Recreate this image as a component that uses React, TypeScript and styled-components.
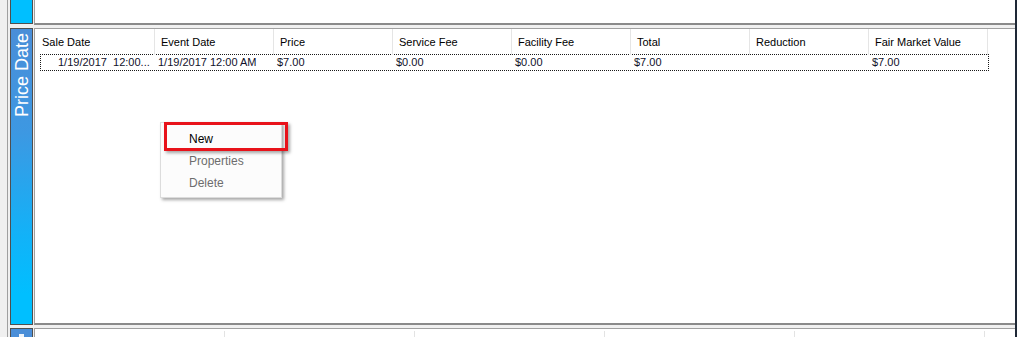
import styled, { createGlobalStyle } from 'styled-components';

const GlobalStyle = createGlobalStyle`
  html, body {
    margin: 0;
    padding: 0;
    background: #ffffff;
  }
  body {
    font-family: "Liberation Sans", Arial, sans-serif;
    overflow: hidden;
  }
`;

const headers = [
  'Sale Date',
  'Event Date',
  'Price',
  'Service Fee',
  'Facility Fee',
  'Total',
  'Reduction',
  'Fair Market Value',
];

const saleRow = [
  '1/19/2017  12:00...',
  '1/19/2017 12:00 AM',
  '$7.00',
  '$0.00',
  '$0.00',
  '$7.00',
  '',
  '$7.00',
];

const menuItems = [
  { label: 'New', disabled: false },
  { label: 'Properties', disabled: true },
  { label: 'Delete', disabled: true },
];

const App = () => {
  return (
    <Screen>
      <GlobalStyle />
      <Gutter />
      <Main>
        <Section $height={25}>
          <Tab $fill="#00bfff" $open />
          <Panel $bottom />
        </Section>

        <Section $height={297}>
          <Tab $fill="linear-gradient(to bottom, #4a8ed8 0%, #3d98e2 35%, #12b2f8 70%, #00bfff 90%)">
            <TabLabel>Price Date</TabLabel>
          </Tab>
          <Panel $top $bottom>
            <HeaderRow>
              {headers.map((h) => (
                <HeaderCell key={h}>{h}</HeaderCell>
              ))}
            </HeaderRow>
            <DataRow>
              {saleRow.map((v, i) => (
                <DataCell key={i} $first={i === 0}>
                  {v}
                </DataCell>
              ))}
            </DataRow>
          </Panel>
        </Section>

        <Section $height={20}>
          <Tab $fill="#4a8ed8">
            <TabIcon />
          </Tab>
          <Panel $top>
            <FooterRow>
              {Array.from({ length: 6 }).map((_, i) => (
                <FooterCell key={i} />
              ))}
            </FooterRow>
          </Panel>
        </Section>
      </Main>

      <ContextMenu>
        {menuItems.map((item) => (
          <MenuItem key={item.label} $disabled={item.disabled}>
            {item.label}
          </MenuItem>
        ))}
      </ContextMenu>
      <Highlight />
    </Screen>
  );
};

const Screen = styled.div`
  position: relative;
  display: flex;
  width: 1018px;
  height: 337px;
  overflow: hidden;
`;

const Gutter = styled.div`
  width: 7px;
  flex-shrink: 0;
  background: #f0f0f0;
`;

const Main = styled.div`
  display: flex;
  flex-direction: column;
  gap: 3px;
  width: 1005px;
  flex-shrink: 0;
  padding-left: 2px;
  border-left: 1px solid #a0a0a0;
  border-right: 2px solid #1e2836;
  background: #f0f0f0;
`;

const Section = styled.div<{ $height: number }>`
  display: flex;
  gap: 1px;
  height: ${({ $height }) => $height}px;
  flex-shrink: 0;
`;

const Tab = styled.div<{ $fill: string; $open?: boolean }>`
  box-sizing: border-box;
  width: 23px;
  flex-shrink: 0;
  display: flex;
  flex-direction: column;
  align-items: center;
  padding-top: 4px;
  margin-bottom: ${({ $open }) => ($open ? '1px' : '0')};
  background: ${({ $fill }) => $fill};
  border: 1px solid #4f4f4f;
  border-top: ${({ $open }) => ($open ? 'none' : '1px solid #4f4f4f')};
`;

const TabLabel = styled.span`
  writing-mode: vertical-rl;
  transform: rotate(180deg);
  color: #ffffff;
  font-size: 18px;
  line-height: 20px;
  white-space: nowrap;
`;

const TabIcon = styled.span`
  display: block;
  width: 5px;
  height: 5px;
  margin-top: 1px;
  background: #eef4fb;
`;

const Panel = styled.div<{ $top?: boolean; $bottom?: boolean }>`
  position: relative;
  flex: 1;
  min-width: 0;
  background: #ffffff;
  border-left: 1px solid #a0a0a0;
  border-top: ${({ $top }) => ($top ? '1px solid #a0a0a0' : 'none')};
  border-bottom: ${({ $bottom }) => ($bottom ? '2px solid #8a8a8a' : 'none')};
`;

const HeaderRow = styled.div`
  display: grid;
  grid-template-columns: repeat(8, 119px);
  height: 25px;
  margin-left: 1px;
`;

const HeaderCell = styled.div`
  box-sizing: border-box;
  padding-left: 6px;
  border-right: 1px solid #e5e5e5;
  color: #000000;
  font-size: 11px;
  line-height: 26px;
  white-space: nowrap;
`;

const DataRow = styled.div`
  box-sizing: border-box;
  display: grid;
  grid-template-columns: 114px repeat(7, 119px);
  width: 949px;
  height: 17px;
  margin-left: 5px;
  border: 1px dotted #1a1a1a;
`;

const DataCell = styled.div<{ $first?: boolean }>`
  padding-left: ${({ $first }) => ($first ? '17px' : '3px')};
  color: #10102a;
  font-size: 11px;
  line-height: 15px;
  white-space: pre;
  overflow: hidden;
`;

const FooterRow = styled.div`
  display: grid;
  grid-template-columns: repeat(6, 190px);
  height: 100%;
  padding-top: 2px;
`;

const FooterCell = styled.div`
  border-right: 1px solid #e3e3e3;
`;

const ContextMenu = styled.div`
  position: absolute;
  left: 160px;
  top: 122px;
  box-sizing: border-box;
  width: 122px;
  padding: 5px 0 3px;
  background: #fcfcfc;
  border: 1px solid #dcdcdc;
  box-shadow: 2px 2px 3px rgba(0, 0, 0, 0.35);
`;

const MenuItem = styled.div<{ $disabled?: boolean }>`
  height: 22px;
  padding-left: 28px;
  color: ${({ $disabled }) => ($disabled ? '#6d6d6d' : '#000000')};
  font-size: 12px;
  line-height: 22px;
`;

const Highlight = styled.div`
  position: absolute;
  left: 164px;
  top: 122px;
  box-sizing: border-box;
  width: 124px;
  height: 29px;
  border: 3px solid #e8121a;
  box-shadow: 2px 2px 3px rgba(0, 0, 0, 0.35);
`;

export default App;
